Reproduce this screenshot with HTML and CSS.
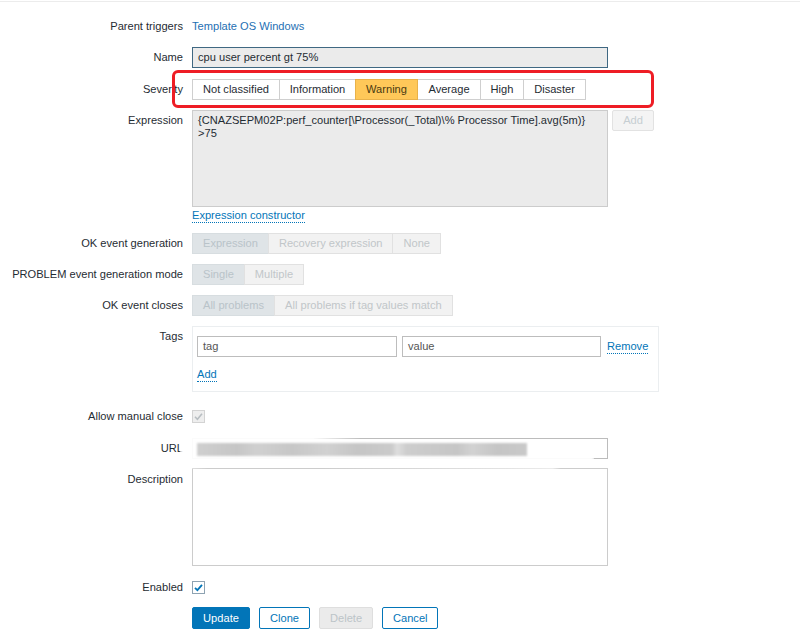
FILE: index.html
```html
<!DOCTYPE html>
<html>
<head>
<meta charset="utf-8">
<link rel="stylesheet" href="styles.css">
</head>
<body>
<div class="page">
  <div class="form">
    <div class="row">
      <div class="lbl">Parent triggers</div>
      <div class="fld"><a class="plain-link">Template OS Windows</a></div>
    </div>
    <div class="row">
      <div class="lbl">Name</div>
      <div class="fld"><div class="input ro focus">cpu user percent gt 75%</div></div>
    </div>
    <div class="row sev-row">
      <div class="lbl">Severity</div>
      <div class="fld">
        <div class="seg sev">
          <span>Not classified</span><span>Information</span><span class="warn">Warning</span><span>Average</span><span>High</span><span>Disaster</span>
        </div>
      </div>
    </div>
    <div class="row">
      <div class="lbl">Expression</div>
      <div class="fld">
        <div class="expr-line">
          <div class="textarea ro">{CNAZSEPM02P:perf_counter[\Processor(_Total)\% Processor Time].avg(5m)}<br>&gt;75</div>
          <span class="btn-add">Add</span>
        </div>
        <a class="dlink constr">Expression constructor</a>
      </div>
    </div>
    <div class="row">
      <div class="lbl">OK event generation</div>
      <div class="fld">
        <div class="seg dis"><span class="sel">Expression</span><span>Recovery expression</span><span>None</span></div>
      </div>
    </div>
    <div class="row">
      <div class="lbl">PROBLEM event generation mode</div>
      <div class="fld">
        <div class="seg dis"><span class="sel">Single</span><span>Multiple</span></div>
      </div>
    </div>
    <div class="row">
      <div class="lbl">OK event closes</div>
      <div class="fld">
        <div class="seg dis"><span class="sel">All problems</span><span>All problems if tag values match</span></div>
      </div>
    </div>
    <div class="row">
      <div class="lbl">Tags</div>
      <div class="fld">
        <div class="tagbox">
          <div class="tagrow">
            <div class="input tagin">tag</div>
            <div class="input valin">value</div>
            <a class="dlink">Remove</a>
          </div>
          <a class="dlink addtag">Add</a>
        </div>
      </div>
    </div>
    <div class="row gap14">
      <div class="lbl">Allow manual close</div>
      <div class="fld chk-cell"><span class="chk disabled"><svg viewBox="0 0 13 13" width="13" height="13"><path d="M3 6.8 L5.4 9.2 L10 3.8" fill="none" stroke="#b8bec2" stroke-width="1.6"/></svg></span></div>
    </div>
    <div class="row gap11">
      <div class="lbl">URL</div>
      <div class="fld"><div class="input url"><span class="blurred"></span></div></div>
    </div>
    <div class="row gap9">
      <div class="lbl desc-lbl">Description</div>
      <div class="fld"><div class="textarea desc"></div></div>
    </div>
    <div class="row gap11">
      <div class="lbl">Enabled</div>
      <div class="fld chk-cell"><span class="chk on"><svg viewBox="0 0 13 13" width="13" height="13"><path d="M3 6.8 L5.4 9.2 L10 3.8" fill="none" stroke="#0275b8" stroke-width="1.8"/></svg></span></div>
    </div>
    <div class="row">
      <div class="lbl"></div>
      <div class="fld buttons">
        <span class="btn primary">Update</span>
        <span class="btn alt">Clone</span>
        <span class="btn off">Delete</span>
        <span class="btn alt">Cancel</span>
      </div>
    </div>
  </div>
  <div class="smudge"></div>
  <div class="highlight"></div>
</div>
</body>
</html>
```

FILE: styles.css
```css
html, body {
  margin: 0;
  padding: 0;
  background: #ffffff;
}
body {
  font-family: "Liberation Sans", Arial, sans-serif;
  font-size: 11.1px;
  color: #1f2c33;
}
.page {
  position: relative;
  width: 800px;
  height: 630px;
  border-top: 1px solid #ececec;
  margin-top: 1px;
  box-sizing: border-box;
  overflow: hidden;
}
.form {
  display: flex;
  flex-direction: column;
  gap: 10px;
  padding-top: 14px;
}
.row {
  display: grid;
  grid-template-columns: 183px 1fr;
  column-gap: 9px;
}
.sev-row { margin-top: 1px; }
.gap11 { margin-top: 1px; }
.gap14 { margin-top: 4px; }
.gap9 { margin-top: -1px; }
.lbl {
  text-align: right;
  line-height: 21px;
  white-space: nowrap;
}
.fld {
  min-height: 21px;
  display: flex;
  flex-direction: column;
  align-items: flex-start;
}
.plain-link {
  color: #1e6fb3;
  line-height: 21px;
}
.dlink {
  color: #0275b8;
  border-bottom: 1px dotted #0275b8;
  line-height: 13px;
}
.input {
  box-sizing: border-box;
  height: 21px;
  line-height: 19px;
  padding: 0 5px;
  border: 1px solid #c8c8c8;
  background: #fff;
}
.input.ro {
  width: 416px;
  background: #ebebeb;
}
.input.focus {
  border-color: #3f6882;
}
.seg {
  display: flex;
  height: 21px;
}
.seg span {
  box-sizing: border-box;
  height: 21px;
  line-height: 19px;
  padding: 0 10px;
  border: 1px solid #cfcfcf;
  margin-left: -1px;
  background: #ffffff;
  white-space: nowrap;
}
.seg span:first-child { margin-left: 0; }
.sev span:nth-child(1) { width: 88px; }
.sev span:nth-child(2) { width: 77px; }
.sev span:nth-child(3) { width: 63px; }
.sev span:nth-child(4) { width: 64px; }
.sev span:nth-child(5) { width: 44px; }
.sev span:nth-child(6) { width: 63px; }
.sev span { text-align: center; padding: 0; }
.sev span.warn {
  background: #ffc859;
  border-color: #e9b24a;
  position: relative;
  color: #4a3a12;
}
.seg.dis span {
  background: #f2f2f2;
  border-color: #e1e1e1;
  color: #c1c6c9;
}
.seg.dis span.sel {
  background: #dfe4e7;
  border-color: #d7dde0;
  color: #b9c3c9;
}
.expr-line {
  display: flex;
  gap: 4px;
  align-items: flex-start;
}
.textarea {
  box-sizing: border-box;
  width: 416px;
  border: 1px solid #cccccc;
  background: #fff;
  padding: 3px 5px;
  line-height: 13px;
}
.textarea.ro {
  height: 97px;
  background: #ebebeb;
}
.btn-add {
  box-sizing: border-box;
  width: 42px;
  height: 21px;
  line-height: 19px;
  text-align: center;
  border: 1px solid #e2e2e2;
  background: #f4f4f4;
  color: #c6ced2;
  border-radius: 2px;
}
.constr {
  margin-top: 2px;
}
.tagbox {
  box-sizing: border-box;
  width: 467px;
  height: 66px;
  border: 1px solid #ebeef0;
  padding: 9px 4px 0 4px;
  display: flex;
  flex-direction: column;
  align-items: flex-start;
}
.tagrow {
  display: flex;
  align-items: center;
  gap: 5px;
}
.tagin { width: 200px; color: #555; border-color: #bdbdbd; }
.valin { width: 199px; color: #555; border-color: #bdbdbd; }
.tagrow .dlink { margin-left: 1px; }
.addtag { margin-top: 11px; }
.chk-cell {
  justify-content: center;
}
.chk {
  box-sizing: border-box;
  width: 13px;
  height: 13px;
  border: 1px solid #c6c6c6;
  display: block;
  position: relative;
  background: #fff;
}
.chk svg {
  position: absolute;
  left: -1px;
  top: -1px;
}
.chk.disabled {
  background: #eeeeee;
  border-color: #d3d3d3;
}
.chk.on {
  border-color: #8ea3b2;
}
.input.url {
  width: 416px;
  border-color: #bcbcbc;
}
.blurred {
  position: absolute;
  z-index: 3;
  left: 197px;
  top: 441px;
  width: 330px;
  height: 13px;
  background: linear-gradient(90deg, #cfcfcf 0, #c6c6c6 40px, #d0d0d0 60px, #c7c7c7 95px, #d1d1d1 130px, #c5c5c5 160px, #cbcbcb 195px, #dedede 200px, #cdcdcd 210px, #c6c6c6 260px, #d2d2d2 275px, #c5c5c5 300px, #c9c9c9 330px);
  filter: blur(0.8px);
}
.desc {
  height: 98px;
}
.desc-lbl { line-height: 23px; }
.buttons {
  flex-direction: row;
  gap: 9px;
  margin-top: -1px;
}
.btn {
  box-sizing: border-box;
  height: 22px;
  line-height: 20px;
  padding: 0 10px;
  border: 1px solid #0275b8;
  border-radius: 2px;
  background: #fff;
  color: #0275b8;
  text-align: center;
}
.btn.primary {
  width: 58px;
  background: #0275b8;
  color: #fff;
}
.btn.alt:nth-child(2) { width: 51px; }
.btn.alt:nth-child(4) { width: 56px; }
.btn.off {
  width: 54px;
  background: #ebebeb;
  border-color: #dedede;
  color: #bcc4c8;
}
.smudge {
  position: absolute;
  z-index: 2;
  left: 180px;
  top: 431px;
  width: 414px;
  height: 36px;
  background: rgba(255,255,255,0.94);
  clip-path: polygon(0 0, 30% 0, 32% 14%, 100% 30%, 100% 86%, 90% 100%, 10% 96%, 0 100%);
  filter: blur(1.5px);
  pointer-events: none;
}
.highlight {
  position: absolute;
  z-index: 4;
  left: 172px;
  top: 68px;
  width: 482px;
  height: 38px;
  box-sizing: border-box;
  border: 3px solid #ee1d25;
  border-radius: 6px;
  pointer-events: none;
}
```
